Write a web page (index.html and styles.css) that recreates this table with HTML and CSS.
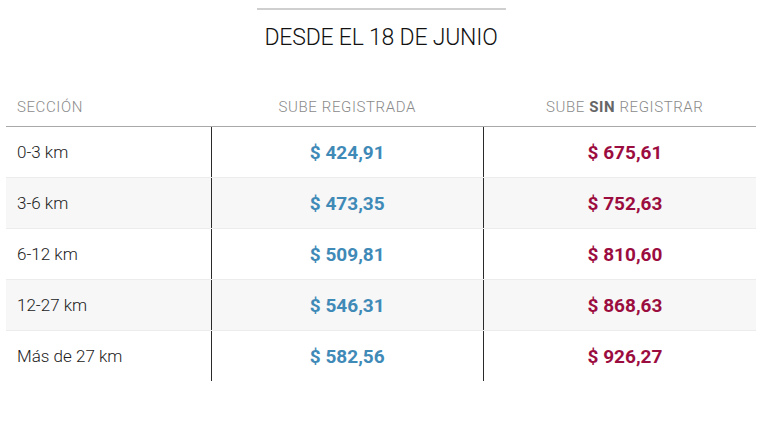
FILE: index.html
```html
<!DOCTYPE html>
<html lang="es">
<head>
<meta charset="utf-8">
<link rel="stylesheet" href="styles.css">
</head>
<body>
<div class="page">
  <div class="heading">
    <div class="rule"></div>
    <h1 class="title">DESDE EL 18 DE JUNIO</h1>
  </div>
  <table class="fares">
    <thead>
      <tr>
        <th class="c-sec">SECCIÓN</th>
        <th class="c-val">SUBE REGISTRADA</th>
        <th class="c-val c-last">SUBE <b>SIN</b> REGISTRAR</th>
      </tr>
    </thead>
    <tbody>
      <tr><td class="c-sec">0-3 km</td><td class="c-val reg">$ 424,91</td><td class="c-val c-last sin">$ 675,61</td></tr>
      <tr class="alt"><td class="c-sec">3-6 km</td><td class="c-val reg">$ 473,35</td><td class="c-val c-last sin">$ 752,63</td></tr>
      <tr><td class="c-sec">6-12 km</td><td class="c-val reg">$ 509,81</td><td class="c-val c-last sin">$ 810,60</td></tr>
      <tr class="alt"><td class="c-sec">12-27 km</td><td class="c-val reg">$ 546,31</td><td class="c-val c-last sin">$ 868,63</td></tr>
      <tr><td class="c-sec">Más de 27 km</td><td class="c-val reg">$ 582,56</td><td class="c-val c-last sin">$ 926,27</td></tr>
    </tbody>
  </table>
</div>
</body>
</html>
```

FILE: styles.css
```css
html, body {
  margin: 0;
  padding: 0;
  background: #fff;
}
body {
  font-family: Roboto, "Liberation Sans", sans-serif;
  color: #222;
}
.page {
  padding: 8px 9px 0 6px;
}
.heading {
  display: flex;
  flex-direction: column;
  align-items: center;
}
.rule {
  width: 249px;
  height: 2px;
  background: #cfcfcf;
}
.title {
  margin: 14px 0 0;
  font-size: 23px;
  font-weight: 300;
  letter-spacing: -0.2px;
  line-height: 28px;
  color: #111;
}
.fares {
  margin-top: 34px;
  width: 750px;
  border-collapse: collapse;
  table-layout: fixed;
}
.fares th {
  font-weight: 300;
  font-size: 15px;
  color: #8a8a8a;
  letter-spacing: 0.6px;
  height: 38px;
  padding: 2px 0 0;
  vertical-align: middle;
  border-bottom: 1px solid #a8a8a8;
}
.fares th b {
  font-weight: 700;
  color: #666;
}
.fares th.c-sec, .fares td.c-sec {
  text-align: left;
  padding-left: 11px;
  width: 194px;
}
.fares th.c-val {
  text-align: center;
}
.fares .c-last {
  padding-left: 10px;
}
.fares td {
  height: 50px;
  padding: 0;
  font-size: 17px;
  font-weight: 300;
  color: #222;
  border-bottom: 1px solid #ececec;
}
.fares tbody tr:last-child td {
  border-bottom: none;
}
.fares td.c-val {
  text-align: center;
  font-weight: 700;
  font-size: 19px;
  border-left: 1px solid #2a2a2a;
}
.fares td.c-last {
  padding-left: 10px;
}
.fares td.reg { color: #3f8ab7; }
.fares td.sin { color: #9c0d3f; }
.fares tr.alt td { background: #f7f7f7; }
```
